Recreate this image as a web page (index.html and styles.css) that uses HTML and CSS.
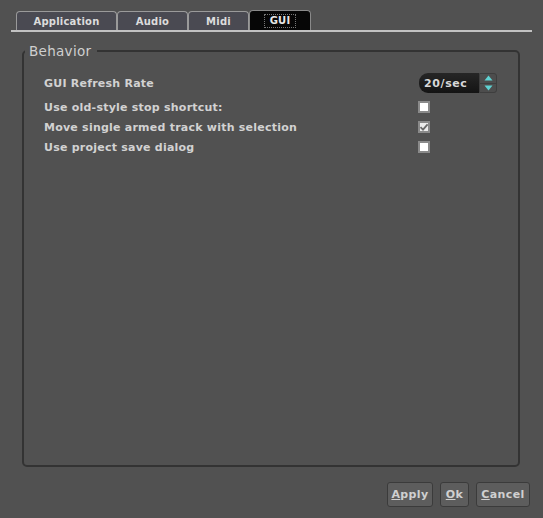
FILE: index.html
```html
<!DOCTYPE html>
<html>
<head>
<meta charset="utf-8">
<link rel="stylesheet" href="styles.css">
</head>
<body>
<div class="window">
  <div class="tabbar">
    <div class="tab">Application</div>
    <div class="tab tab-audio">Audio</div>
    <div class="tab tab-midi">Midi</div>
    <div class="tab tab-gui active"><span class="focus">GUI</span></div>
  </div>
  <div class="page">
    <fieldset class="group">
      <legend class="legend">Behavior</legend>
      <div class="rows">
        <div class="row row-spin">
          <span class="label">GUI Refresh Rate</span>
          <div class="spin">
            <span class="spin-value">20/sec</span>
            <div class="spin-btns">
              <span class="spin-btn"><svg width="9" height="6" viewBox="0 0 9 6"><polygon points="4.5,0.5 8.5,5.5 0.5,5.5" fill="#5fd3d3"/></svg></span>
              <span class="spin-btn"><svg width="9" height="6" viewBox="0 0 9 6"><polygon points="0.5,0.5 8.5,0.5 4.5,5.5" fill="#5fd3d3"/></svg></span>
            </div>
          </div>
        </div>
        <div class="row">
          <span class="label">Use old-style stop shortcut:</span>
          <span class="check"></span>
        </div>
        <div class="row">
          <span class="label">Move single armed track with selection</span>
          <span class="check checked"><svg width="10" height="10" viewBox="0 0 10 10"><path d="M1.5 5.2 L4 7.6 L8.6 2.4" stroke="#6a6a6a" stroke-width="1.8" fill="none"/></svg></span>
        </div>
        <div class="row">
          <span class="label">Use project save dialog</span>
          <span class="check"></span>
        </div>
      </div>
    </fieldset>
  </div>
  <div class="buttons">
    <button class="btn btn-apply"><u>A</u>pply</button>
    <button class="btn btn-ok"><u>O</u>k</button>
    <button class="btn btn-cancel"><u>C</u>ancel</button>
  </div>
</div>
</body>
</html>
```
FILE: styles.css
```css
html, body {
  margin: 0;
  padding: 0;
  background: #515151;
}
body {
  width: 543px;
  height: 518px;
  overflow: hidden;
  font-family: "DejaVu Sans", "Liberation Sans", sans-serif;
  color: #d4d4d4;
}
.window {
  display: flex;
  flex-direction: column;
  height: 518px;
}
.tabbar {
  display: flex;
  align-items: flex-end;
  margin: 11px 11px 0 11px;
  padding-left: 5px;
  height: 19px;
  border-bottom: 2px solid #c2c2c2;
}
.tab {
  box-sizing: border-box;
  height: 19px;
  width: 101px;
  background: #4a4a52;
  border: 1px solid #9a9a9a;
  border-bottom: none;
  border-radius: 4px 4px 0 0;
  font-size: 10px;
  font-weight: bold;
  color: #dcdcdc;
  display: flex;
  align-items: center;
  justify-content: center;
  padding-top: 1px;
  letter-spacing: 0.2px;
}
.tab-audio { width: 71px; }
.tab-midi { width: 61px; }
.tab-gui { width: 62px; }
.tab.active {
  background: #060606;
  height: 20px;
  border-color: #8a8a8a;
}
.focus {
  outline: 1px dotted #777;
  padding: 0 5px;
  line-height: 12px;
  font-weight: bold;
  color: #e8e8e8;
}
.page {
  flex: 1;
  padding: 11px 23px 0 22px;
}
.group {
  box-sizing: border-box;
  margin: 0;
  height: 424px;
  border: 2px solid #333333;
  border-radius: 5px;
  padding: 0 0 0 20px;
}
.legend {
  font-size: 13.5px;
  color: #cfcfcf;
  padding: 0 6px 0 4px;
  margin-left: -19px;
  letter-spacing: 0.3px;
}
.rows {
  display: flex;
  flex-direction: column;
  padding-top: 13px;
}
.row {
  display: flex;
  align-items: center;
  height: 20px;
  position: relative;
}
.row-spin {
  height: 22px;
  margin-bottom: 3px;
}
.label {
  font-size: 11px;
  font-weight: bold;
  color: #d2d2d2;
  letter-spacing: 0.23px;
  width: 374px;
}
.spin {
  display: flex;
  align-items: stretch;
  height: 20px;
  width: 78px;
  box-sizing: border-box;
  margin-left: 1px;
}
.spin-value {
  flex: 1;
  background: linear-gradient(#262626, #141414);
  border-radius: 9px 0 0 9px;
  font-size: 11px;
  font-weight: bold;
  color: #d8d8d8;
  letter-spacing: 0.6px;
  display: flex;
  align-items: center;
  padding-left: 5px;
}
.spin-btns {
  display: flex;
  flex-direction: column;
  width: 18px;
  border: 1px solid #3e3e3e;
  border-radius: 0 3px 3px 0;
  background: #4d4d4d;
  box-sizing: border-box;
}
.spin-btn {
  flex: 1;
  display: flex;
  align-items: center;
  justify-content: center;
}
.spin-btn + .spin-btn {
  border-top: 1px solid #3e3e3e;
}
.check {
  box-sizing: border-box;
  width: 12px;
  height: 12px;
  background: #ffffff;
  border: 2px solid #8a8a8a;
  display: flex;
  align-items: center;
  justify-content: center;
}
.check.checked {
  background: #ececec;
}
.check svg { flex: none; }
.buttons {
  display: flex;
  justify-content: flex-end;
  gap: 7px;
  padding: 0 13px 12px 0;
  margin-top: 15px;
}
.btn {
  box-sizing: border-box;
  height: 25px;
  background: #5d5d5d;
  border: 1px solid #3b3b3b;
  border-radius: 3px;
  font-family: "DejaVu Sans", sans-serif;
  font-size: 11px;
  font-weight: bold;
  color: #d0d0d0;
  letter-spacing: 0.4px;
  padding: 0;
}
.btn-apply { width: 46px; }
.btn-ok { width: 29px; }
.btn-cancel { width: 54px; }
```
